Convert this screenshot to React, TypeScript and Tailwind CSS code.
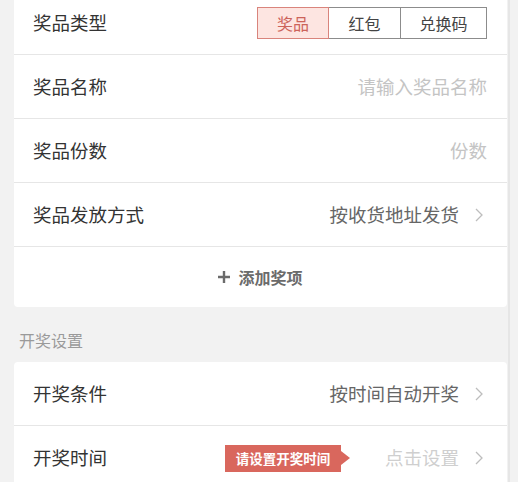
import React from "react";

const font = { fontFamily: '"Noto Sans CJK SC", "Noto Sans", sans-serif' };

function Chevron() {
  return (
    <svg width="8" height="14" viewBox="0 0 8 14" className="ml-[16px] mr-[4px]">
      <path d="M1 1 L7 7 L1 13" fill="none" stroke="#bdbdbd" strokeWidth="1.3" />
    </svg>
  );
}

function Row({ label, children, last }: { label: string; children?: React.ReactNode; last?: boolean }) {
  return (
    <div
      className={`flex h-[64px] items-center justify-between pl-[19px] pr-[20px] ${last ? "" : "border-b border-[#e6e6e6]"}`}
    >
      <span className="text-[18.5px] text-[#333]">{label}</span>
      <div className="flex items-center">{children}</div>
    </div>
  );
}

export default function App() {
  return (
    <div className="min-h-[482px] w-[518px] overflow-hidden bg-[#f2f2f2]" style={font}>
      <div className="flex">
        <div className="w-[508px] pl-[14px] pr-[1px]">
          <div className="mt-[-9px] rounded-[4px] bg-white">
            <Row label="奖品类型">
              <div className="flex h-[32px] text-[16px]">
                <div className="flex w-[72px] items-center justify-center border border-[#d9847c] bg-[#fde5e1] text-[#cc635a]">
                  奖品
                </div>
                <div className="flex w-[71px] items-center justify-center border-y border-[#8c8c8c] text-[#444]">
                  红包
                </div>
                <div className="flex w-[87px] items-center justify-center border border-[#8c8c8c] text-[#444]">
                  兑换码
                </div>
              </div>
            </Row>
            <Row label="奖品名称">
              <span className="text-[18.5px] text-[#c4c4c4]">请输入奖品名称</span>
            </Row>
            <Row label="奖品份数">
              <span className="text-[18.5px] text-[#c4c4c4]">份数</span>
            </Row>
            <Row label="奖品发放方式">
              <span className="text-[18.5px] text-[#666]">按收货地址发货</span>
              <Chevron />
            </Row>
            <div className="flex h-[60px] items-center justify-center text-[16px] font-semibold text-[#6b6b6b]">
              <svg width="12" height="12" viewBox="0 0 12 12" className="mr-[8px]">
                <path d="M6 0 V12 M0 6 H12" stroke="#6b6b6b" strokeWidth="2.4" />
              </svg>
              添加奖项
            </div>
          </div>

          <div className="flex h-[55px] items-center pl-[5px] pt-[11px] text-[16px] text-[#9a9a9a]">开奖设置</div>

          <div className="rounded-[4px] bg-white">
            <Row label="开奖条件">
              <span className="text-[18.5px] text-[#666]">按时间自动开奖</span>
              <Chevron />
            </Row>
            <Row label="开奖时间" last>
              <div className="relative mr-[44px] flex h-[27px] w-[116px] items-center justify-center bg-[#d9675d] text-[13.5px] font-bold text-white">
                请设置开奖时间
                <span className="absolute right-[-9px] top-1/2 h-0 w-0 -translate-y-1/2 border-y-[7px] border-l-[9px] border-y-transparent border-l-[#d9675d]" />
              </div>
              <span className="text-[18.5px] text-[#cfcfcf]">点击设置</span>
              <Chevron />
            </Row>
          </div>
        </div>
        <div className="w-[2px] bg-[#e6e6e6]" />
      </div>
    </div>
  );
}
